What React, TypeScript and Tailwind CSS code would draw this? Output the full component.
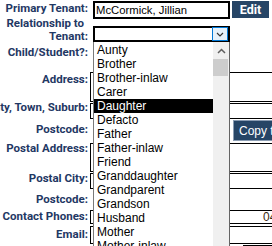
import { JSX } from "react";

const relations = [
  "Aunty",
  "Brother",
  "Brother-inlaw",
  "Carer",
  "Daughter",
  "Defacto",
  "Father",
  "Father-inlaw",
  "Friend",
  "Granddaughter",
  "Grandparent",
  "Grandson",
  "Husband",
  "Mother",
  "Mother-inlaw",
];

const Label = ({ children, className = "" }: { children: React.ReactNode; className?: string }) => (
  <div
    className={`flex w-[88px] shrink-0 justify-end whitespace-nowrap font-['Roboto',sans-serif] text-[11.5px] font-bold leading-[13px] text-[#1f3864] ${className}`}
  >
    {children}
  </div>
);

const Dropdown = (): JSX.Element => (
  <div className="absolute left-[93px] top-[42px] flex h-[210px] w-[137px] border-x border-l-[#7a7a7a] border-r-[#646464] bg-white">
    <ul className="flex-1 pt-px text-[12px] leading-[14px] text-black">
      {relations.map((r) => (
        <li
          key={r}
          className={`h-[14px] whitespace-nowrap pl-[3px] ${r === "Daughter" ? "bg-black text-white" : ""}`}
        >
          {r}
        </li>
      ))}
    </ul>
    <div className="flex w-[16px] flex-col bg-[#f0f0f0]">
      <div className="flex h-[17px] items-center justify-center">
        <svg width="9" height="6" viewBox="0 0 9 6" fill="none" stroke="#606060" strokeWidth="1.5">
          <path d="M1 5l3.5-3.5L8 5" />
        </svg>
      </div>
      <div className="mr-px h-[17px] bg-[#cdcdcd]" />
    </div>
  </div>
);

export default function App() {
  return (
    <div className="relative h-[246px] w-[272px] overflow-hidden bg-white font-['Liberation_Sans',Arial,sans-serif] text-black">
      <div className="flex flex-col">
        {/* primary tenant */}
        <div className="flex h-[17px] items-start">
          <Label className="mt-[2px]">Primary Tenant:</Label>
          <div className="ml-[5px] mt-px flex h-[18px] w-[137px] shrink-0 items-center whitespace-nowrap border-2 border-black pl-px text-[11.3px]">
            McCormick, Jillian
          </div>
          <button className="ml-[2px] mt-px h-[17px] w-[37px] shrink-0 bg-[#274566] font-['Roboto',sans-serif] text-[12.5px] font-bold leading-[17px] text-white">
            Edit
          </button>
        </div>

        {/* relationship */}
        <div className="flex h-[25px] items-start">
          <div className="flex w-[88px] shrink-0 flex-col items-end whitespace-nowrap font-['Roboto',sans-serif] text-[11.5px] font-bold leading-[13px] text-[#1f3864]">
            <span className="pr-[4px]">Relationship to</span>
            <span>Tenant:</span>
          </div>
          <div className="ml-[5px] mt-[9px] flex h-[16px] w-[137px] shrink-0 border-2 border-black">
            <div className="flex-1" />
            <div className="-my-px flex w-[16px] items-center justify-center border border-[#0078d7] bg-[#e5f1fb]">
              <svg width="8" height="5" viewBox="0 0 8 5" fill="none" stroke="#333" strokeWidth="1.2">
                <path d="M1 1l3 3 3-3" />
              </svg>
            </div>
          </div>
        </div>

        {/* child / student */}
        <div className="flex h-[30px] items-start">
          <Label className="mt-[3.5px]">Child/Student?:</Label>
        </div>

        {/* address */}
        <div className="flex h-[31px] items-start">
          <Label className="mt-px">Address:</Label>
          <div className="ml-[2px] h-[30px] w-[220px] shrink-0 border border-black" />
        </div>

        {/* city */}
        <div className="flex h-[17px] items-start">
          <Label className="-mt-[2px]">City, Town, Suburb:</Label>
          <div className="ml-[2px] h-[16px] w-[220px] shrink-0 border border-black" />
        </div>

        {/* postcode + copy */}
        <div className="flex h-[23px] items-start">
          <Label className="mt-[3px]">Postcode:</Label>
          <button className="ml-[145px] h-[21px] w-[130px] shrink-0 whitespace-nowrap border border-[#8a9cb2] bg-[#264566] pl-[5px] text-left text-[12px] text-white">
            Copy to Postal Address
          </button>
        </div>

        {/* postal address */}
        <div className="flex h-[30px] items-start">
          <Label className="-mt-px">Postal Address:</Label>
          <div className="ml-[2px] h-[29px] w-[220px] shrink-0 border border-black" />
        </div>

        {/* postal city */}
        <div className="flex h-[17px] items-start">
          <Label className="-mt-px">Postal City:</Label>
          <div className="ml-[2px] h-[16px] w-[220px] shrink-0 border border-black" />
        </div>

        {/* postal postcode */}
        <div className="flex h-[20px] items-start">
          <Label className="mt-[2.5px]">Postcode:</Label>
        </div>

        {/* phones */}
        <div className="flex h-[16px] items-start">
          <Label className="-mt-[0.5px]">Contact Phones:</Label>
          <div className="ml-[2px] flex h-[14px] w-[220px] shrink-0 items-center overflow-hidden whitespace-nowrap border border-black pl-[172px] text-[12px] text-[#3a2a10]">
            0412 555 019
          </div>
        </div>

        {/* email */}
        <div className="flex h-[19px] items-start">
          <Label className="mt-[1.5px]">Email:</Label>
          <div className="ml-[2px] h-[18px] w-[220px] shrink-0 border border-black" />
        </div>

        <div className="flex h-[20px] items-start">
          <div className="ml-[243px] h-[20px] w-[60px] shrink-0 border border-black" />
        </div>
      </div>

      <Dropdown />
    </div>
  );
}
